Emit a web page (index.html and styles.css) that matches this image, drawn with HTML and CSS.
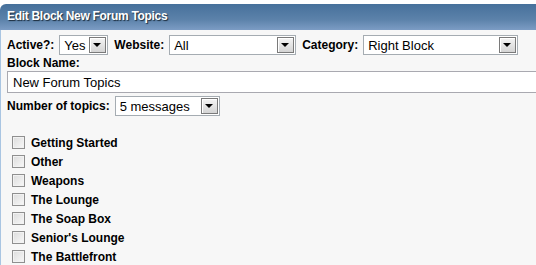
FILE: index.html
```html
<!DOCTYPE html>
<html>
<head>
	<title>Edit Block</title>
	<meta charset="utf-8">
	<link rel="stylesheet" href="styles.css">
</head>
<body>

<div id="block">
	<div class="head">Edit Block New Forum Topics</div>
	<div class="body">
		<div class="row">
			<label>Active?:</label>
			<span class="sel w_yes"><select><option>Yes</option><option>No</option></select></span>
			<label>Website:</label>
			<span class="sel w_site"><select><option>All</option></select></span>
			<label>Category:</label>
			<span class="sel w_cat"><select><option>Right Block</option><option>Left Block</option></select></span>
		</div>
		<div class="lbl">Block Name:</div>
		<input class="txt" type="text" value="New Forum Topics"/>
		<div class="row">
			<label>Number of topics:</label>
			<span class="sel w_num"><select><option>5 messages</option><option>10 messages</option></select></span>
		</div>

		<ul class="forums">
			<li><input type="checkbox"/><span>Getting Started</span></li>
			<li><input type="checkbox"/><span>Other</span></li>
			<li><input type="checkbox"/><span>Weapons</span></li>
			<li><input type="checkbox"/><span>The Lounge</span></li>
			<li><input type="checkbox"/><span>The Soap Box</span></li>
			<li><input type="checkbox"/><span>Senior's Lounge</span></li>
			<li><input type="checkbox"/><span>The Battlefront</span></li>
		</ul>
	</div>
</div>

</body>
</html>
```

FILE: styles.css
```css
body {
	margin: 0;
	background: #fff;
	font-family: "Liberation Sans", Arial, sans-serif;
	color: #000;
}
#block {
	padding-top: 4px;
	height: 261px;
	overflow: hidden;
}
.head {
	height: 26px;
	line-height: 25px;
	padding-left: 7px;
	border-top-left-radius: 6px;
	background: linear-gradient(#46709b, #5c82aa 60%, #7c9cc4);
	color: #fff;
	font-size: 12px;
	font-weight: bold;
	text-shadow: 1px 1px 1px #1a2a3a;
	letter-spacing: -0.3px;
}
.body {
	background: #f7f7f7;
	border-left: 1px solid #a9c5e2;
	padding: 5px 0 0 6px;
	height: 240px;
	font-size: 12px;
}
.row {
	display: flex;
	align-items: center;
	height: 20px;
}
.row label {
	font-weight: bold;
	margin-right: 5px;
}
.row .sel + label {
	margin-left: 6px;
}
.lbl {
	font-weight: bold;
	margin-top: 1px;
	height: 14px;
	line-height: 14px;
}
.txt {
	display: block;
	box-sizing: border-box;
	width: calc(100% + 10px);
	height: 22px;
	margin: 1px 0 3px;
	padding: 0 5px;
	border: 1px solid #a9a9b0;
	background: #fff;
	font-family: inherit;
	font-size: 13px;
	outline: none;
}
.sel {
	position: relative;
	display: inline-block;
	box-sizing: border-box;
	height: 20px;
	border: 1px solid #a5acb2;
	background: #fff;
}
.sel select {
	appearance: none;
	-webkit-appearance: none;
	border: none;
	background: transparent;
	width: 100%;
	height: 18px;
	padding: 0 0 0 4px;
	margin: 0;
	font-family: inherit;
	font-size: 13px;
	color: #000;
	outline: none;
}
.sel::after {
	content: "";
	position: absolute;
	right: 1px;
	top: 1px;
	width: 15px;
	height: 14px;
	border: 1px solid #7a7a7a;
	box-shadow: inset 1px 1px 0 #fff;
	background: linear-gradient(#f4f4f4, #d4d4d4);
	pointer-events: none;
}
.sel::before {
	content: "";
	position: absolute;
	right: 6px;
	top: 7px;
	border-left: 4px solid transparent;
	border-right: 4px solid transparent;
	border-top: 4px solid #000;
	z-index: 1;
	pointer-events: none;
}
.w_yes { width: 49px; }
.w_site { width: 127px; }
.w_cat { width: 155px; }
.w_num { width: 105px; }

.forums {
	list-style: none;
	margin: 17px 0 0;
	padding: 0 0 0 5px;
}
.forums li {
	display: flex;
	align-items: center;
	height: 19px;
	font-weight: bold;
}
.forums input {
	appearance: none;
	-webkit-appearance: none;
	box-sizing: border-box;
	width: 13px;
	height: 13px;
	margin: 0 6px 0 0;
	border: 1px solid #8f8f8f;
	background: linear-gradient(135deg, #dcdcdc, #f8f8f8);
	box-shadow: inset 0 0 0 1px #f2f2f2;
}
```
